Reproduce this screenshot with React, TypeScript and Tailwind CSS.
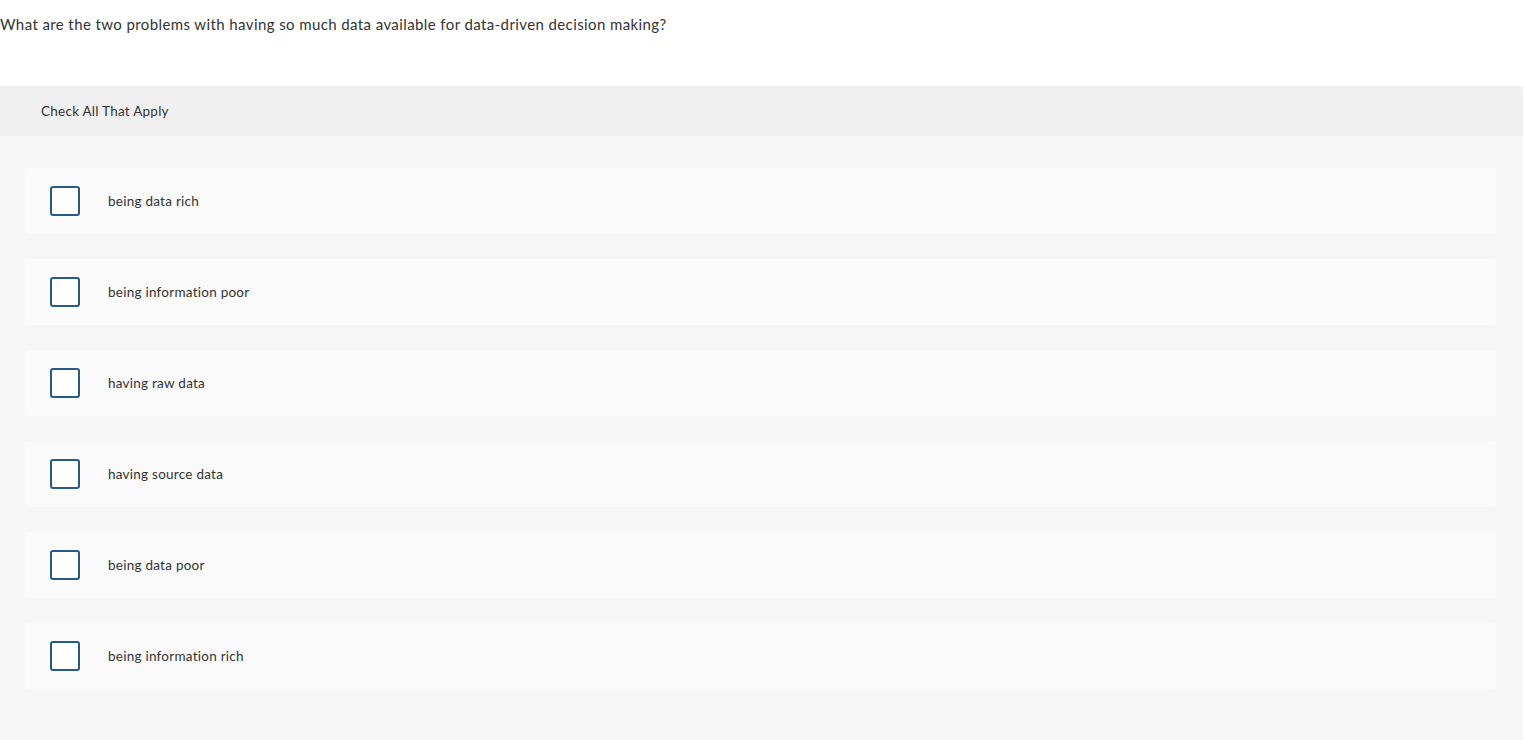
import React from "react";

const options = [
  "being data rich",
  "being information poor",
  "having raw data",
  "having source data",
  "being data poor",
  "being information rich",
];

export default function App() {
  return (
    <div className="w-[1524px] h-[740px] bg-white text-[#333333] overflow-hidden" style={{ fontFamily: "Lato, 'Open Sans', sans-serif" }}>
      <div className="h-[86px] pt-[14px]">
        <p className="text-[15px] leading-[20px] tracking-[0.4px] m-0">What are the two problems with having so much data available for data-driven decision making?</p>
      </div>
      <div className="bg-[#f0f0f0] h-[50px] flex items-center pl-[41px] rounded-tr-[4px] mr-[1px]">
        <span className="text-[13.5px] tracking-[0.25px]">Check All That Apply</span>
      </div>
      <div className="bg-[#f6f6f6] h-[604px] pt-[32px] pl-[25px] pr-[27px] mr-[1px] flex flex-col gap-[25px]">
        {options.map((o) => (
          <div key={o} className="h-[66px] bg-[#fafafa] rounded-[3px] flex items-center pl-[25px]">
            <div className="w-[30px] h-[30px] border-2 border-[#255a8c] rounded-[3px] bg-white shrink-0" />
            <span className="ml-[28px] text-[13.5px] tracking-[0.25px] leading-[18px]">{o}</span>
          </div>
        ))}
      </div>
    </div>
  );
}
